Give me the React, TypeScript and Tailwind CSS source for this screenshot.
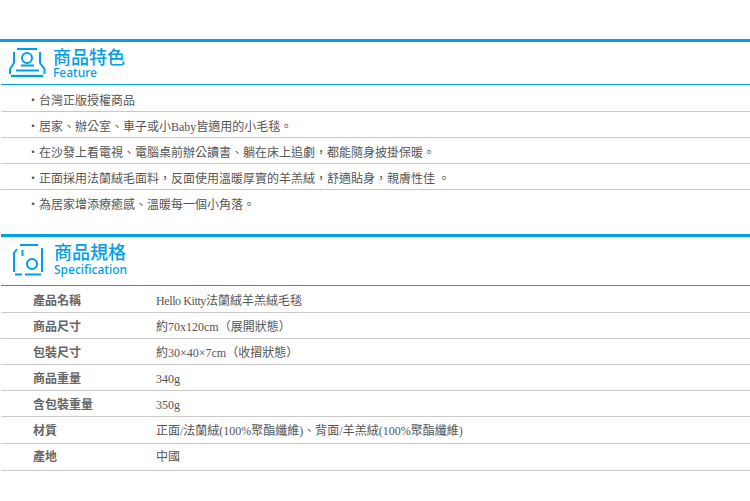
const features = [
  "台灣正版授權商品",
  "居家、辦公室、車子或小Baby皆適用的小毛毯。",
  "在沙發上看電視、電腦桌前辦公讀書、躺在床上追劇\uFF0C都能隨身披掛保暖。",
  "正面採用法蘭絨毛面料\uFF0C反面使用溫暖厚實的羊羔絨\uFF0C舒適貼身\uFF0C親膚性佳 。",
  "為居家增添療癒感、溫暖每一個小角落。",
];
const specs = [
  { k: "產品名稱", v: <><span className="tracking-[-0.4px]">Hello Kitty</span>法蘭絨羊羔絨毛毯</>, h: "h-[26px] pt-[3px]" },
  { k: "商品尺寸", v: "約70x120cm\uFF08展開狀態\uFF09", h: "h-[26px] pt-[3px]" },
  { k: "包裝尺寸", v: "約30×40×7cm\uFF08收摺狀態\uFF09", h: "h-[26px] pt-[3px]" },
  { k: "商品重量", v: "340g", h: "h-[26px] pt-[3px]" },
  { k: "含包裝重量", v: "350g", h: "h-[26px] pt-[3px]" },
  { k: "材質", v: "正面/法蘭絨(100%聚酯纖維)、背面/羊羔絨(100%聚酯纖維)", h: "h-[27px] pt-[1px]" },
  { k: "產地", v: "中國", h: "h-[27px]" },
];
const font = "font-['Liberation_Serif','Noto_Sans_CJK_TC',serif]";
const head = "font-['Noto_Sans','Noto_Sans_CJK_TC',sans-serif]";

function FeatureIcon() {
  return (
    <svg width="37" height="31" viewBox="0 0 37 31" fill="none" stroke="#00a0e9" strokeWidth="2">
      <path d="M8 2H28" />
      <path d="M5 5V16L1 22V27" />
      <path d="M31 5V16L35.5 22V27" />
      <circle cx="18" cy="11" r="5" />
      <path d="M12 18.5H25" />
      <path d="M7 23.5H30" />
      <path d="M2 29H34" strokeWidth="2.4" />
    </svg>
  );
}
function SpecIcon() {
  return (
    <svg width="32" height="33" viewBox="0 0 32 33" fill="none" stroke="#00a0e9" strokeWidth="2">
      <path d="M8 2H26" />
      <path d="M2 29V10L5 6" />
      <path d="M30 5V29" />
      <path d="M10.5 7V13" />
      <circle cx="20" cy="21" r="5" strokeWidth="2.2" />
      <path d="M3 31.5H10M13 31.5H29" />
    </svg>
  );
}

export default function App() {
  return (
    <div className={`w-[750px] h-[501px] bg-white pt-[39px] overflow-hidden ${font}`}>
      <section className="h-[195px]">
        <div className="h-[3px] bg-[#00a0e9]" />
        <div className="h-[43px] ml-[1px] border-b border-[#00a0e9] flex pl-[8px]">
          <div className="pt-[5px]"><FeatureIcon /></div>
          <div className={`ml-[7px] pt-[5px] text-[#00a0e9] ${head}`}>
            <div className="text-[18px] leading-[20px] font-medium">商品特色</div>
            <div className="text-[12px] leading-[12px] font-medium">Feature</div>
          </div>
        </div>
        <ul className="pt-[1px]">
          {features.map((f) => (
            <li key={f} className="h-[26px] ml-[1px] border-b border-[#c8c8c8] pl-[26px] pt-[5px] flex items-center text-[12px] text-[#555] last:border-transparent">
              <span>・{f}</span>
            </li>
          ))}
        </ul>
      </section>
      <section>
        <div className="h-[3px] ml-[1px] bg-[#00a0e9]" />
        <div className="h-[49px] ml-[1px] border-b border-[#00a0e9] flex pl-[11px]">
          <div className="pt-[6px]"><SpecIcon /></div>
          <div className={`ml-[10px] pt-[5px] text-[#00a0e9] ${head}`}>
            <div className="text-[18px] leading-[20px] font-medium">商品規格</div>
            <div className="text-[12px] leading-[15px] font-medium">Specification</div>
          </div>
        </div>
        <div className="pt-[1px]">
          {specs.map(({ k, v, h }) => (
            <div key={k} className={`${h} ml-[1px] border-b border-[#c8c8c8] flex items-center text-[12px] text-[#555]`}>
              <div className="w-[155px] pl-[32px] font-bold text-[#666] shrink-0">{k}</div>
              <div>{v}</div>
            </div>
          ))}
        </div>
      </section>
    </div>
  );
}
